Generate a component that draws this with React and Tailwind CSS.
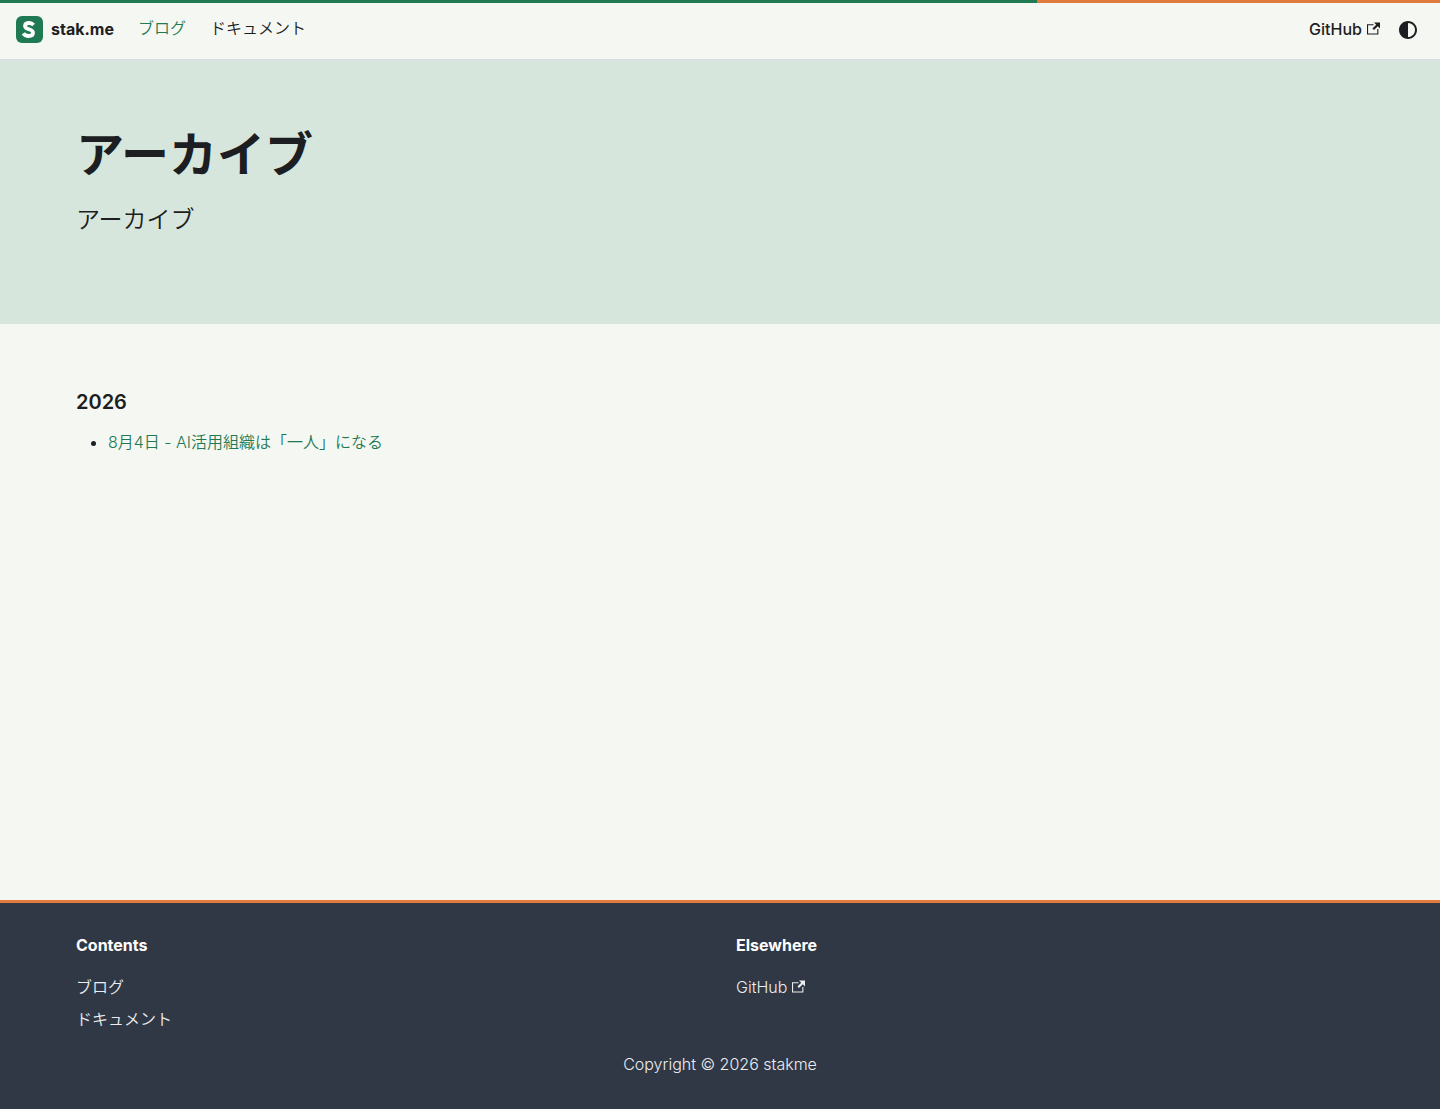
function ExternalIcon() {
  return (
    <svg width="13" height="13" viewBox="0 0 24 24" fill="currentColor" aria-hidden="true" className="ml-[5px] inline-block align-baseline">
      <path d="M21 13v10h-21v-19h12v2h-10v15h17v-8h2zm3-12h-10.988l4.035 4-6.977 7.07 2.828 2.828 6.977-7.07 4.125 4.172v-11z" />
    </svg>
  );
}

function Logo() {
  return (
    <svg width="27" height="27" viewBox="0 0 27 27" aria-hidden="true">
      <rect width="27" height="27" rx="6" fill="#1f7a53" />
      <path
        d="M17.6 9C16.3 7.6 15 7 13.3 7C10.9 7 9 8.1 9 10C9 14 17 12.6 17 16.7C17 18.8 15.2 20 12.5 20C10.5 20 8.6 19.2 7.3 17.4"
        fill="none" stroke="#fff" strokeWidth="3.8"
      />
    </svg>
  );
}

export default function App() {
  return (
    <div className="flex min-h-screen flex-col bg-[#f5f7f2] font-['Inter','Noto_Sans_CJK_JP',sans-serif] text-base text-[#1c1e21]" lang="ja">
      <header className="relative border-b border-[#dadde1]">
        <div className="absolute inset-x-0 top-0 flex h-[3px]" aria-hidden="true">
          <div className="w-[72%] bg-[#1f7a53]" />
          <div className="flex-1 bg-[#e07a3f]" />
        </div>
        <nav className="flex h-[59px] items-center justify-between px-4">
          <div className="flex items-center">
            <a href="#" className="mr-3 flex items-center gap-2 font-bold">
              <Logo />
              <span className="pb-0.5">stak.me</span>
            </a>
            <a href="#blog" className="px-3 pb-1 font-[350] text-[#1f7a53]">ブログ</a>
            <a href="#docs" className="px-3 pb-1 font-[350]">ドキュメント</a>
          </div>
          <div className="flex items-center">
            <a href="#github" className="px-3 pb-0.5 font-medium">GitHub<ExternalIcon /></a>
            <button type="button" aria-label="テーマ切り替え" className="flex size-8 items-center justify-center">
              <svg width="24" height="24" viewBox="0 0 24 24" fill="currentColor" aria-hidden="true">
                <path d="m12 21c4.971 0 9-4.029 9-9s-4.029-9-9-9-9 4.029-9 9 4.029 9 9 9zm4.95-13.95c1.313 1.313 2.05 3.093 2.05 4.95s-0.738 3.637-2.05 4.95c-1.313 1.313-3.093 2.05-4.95 2.05v-14c1.857 0 3.637 0.737 4.95 2.05z" />
              </svg>
            </button>
          </div>
        </nav>
      </header>
      <main className="grow">
        <section className="bg-[#d7e6dc] py-16">
          <div className="mx-auto max-w-[1320px] px-4">
            <h1 className="mb-4 text-5xl leading-[62px] font-bold">アーカイブ</h1>
            <p className="mb-[22px] text-2xl leading-9 font-[350]">アーカイブ</p>
          </div>
        </section>
        <section className="mx-auto max-w-[1320px] px-4 py-16">
          <h2 className="mb-3.5 text-xl leading-7 font-semibold">2026</h2>
          <ul className="list-disc pl-8">
            <li><a href="#post" className="font-[350] text-[#1f7a53]">8月4日 - AI活用組織は「一人」になる</a></li>
          </ul>
        </section>
      </main>
      <footer className="border-t-3 border-[#e07a3f] bg-[#303846] px-8 py-8 text-[#ebedf0]">
        <div className="mx-auto max-w-[1320px] px-4">
          <div className="mb-4 grid grid-cols-2 gap-8">
            <div>
              <h3 className="mb-4 leading-5 font-bold text-white">Contents</h3>
              <ul className="leading-8 font-[350]"><li><a href="#blog">ブログ</a></li><li><a href="#docs">ドキュメント</a></li></ul>
            </div>
            <div>
              <h3 className="mb-4 leading-5 font-bold text-white">Elsewhere</h3>
              <ul className="leading-8 font-[350]"><li><a href="#github">GitHub<ExternalIcon /></a></li></ul>
            </div>
          </div>
          <p className="text-center leading-[26px] font-[350]">Copyright © 2026 stakme</p>
        </div>
      </footer>
    </div>
  );
}
